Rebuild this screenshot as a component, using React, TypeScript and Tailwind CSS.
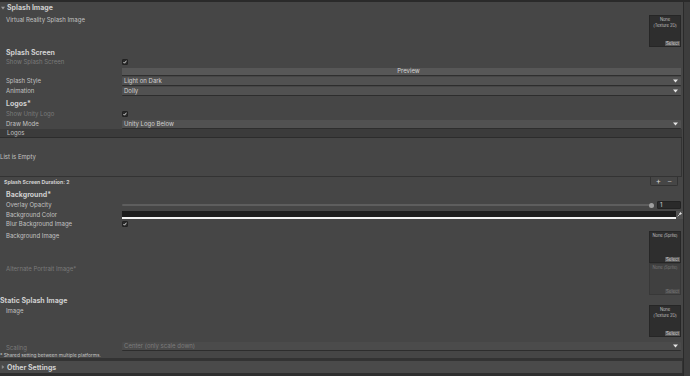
import React from 'react';

const font = { fontFamily: 'Inter, "Noto Sans", sans-serif' };

function Arrow() {
  return (
    <svg width="5" height="4" viewBox="0 0 5 4" className="shrink-0">
      <path d="M0 0.5 H5 L2.5 3.5 Z" fill="#e6e6e6" />
    </svg>
  );
}

function Check() {
  return (
    <div className="w-[6px] h-[6px] bg-[#2a2a2a] border border-[#222] rounded-[1px] flex items-center justify-center">
      <svg width="4" height="4" viewBox="0 0 4 4">
        <path d="M0.5 2 L1.5 3.2 L3.5 0.7" stroke="#e0e0e0" strokeWidth="0.9" fill="none" />
      </svg>
    </div>
  );
}

function Dropdown({ value, dim = false }: { value: string; dim?: boolean }) {
  return (
    <div
      className={`h-[9px] flex-1 flex items-center justify-between pl-[2px] pr-[3px] rounded-[1px] border-b border-[#2d2d2d] ${
        dim ? 'bg-[#4b4b4b] text-[#7c7c7c]' : 'bg-[#515151] text-[#d2d2d2]'
      }`}
    >
      <span className="text-[6px] leading-none">{value}</span>
      <Arrow />
    </div>
  );
}

function Label({ text, dim = false }: { text: string; dim?: boolean }) {
  return (
    <div className={`w-[116px] shrink-0 text-[6px] leading-none ${dim ? 'text-[#7a7a7a]' : 'text-[#c2c2c2]'}`}>
      {text}
    </div>
  );
}

function ObjectBox({ top, bottom, dim = false }: { top: string; bottom?: string; dim?: boolean }) {
  return (
    <div
      className={`w-[32px] h-[32px] shrink-0 border flex flex-col justify-between ${
        dim ? 'bg-[#404040] border-[#383838] text-[#767676]' : 'bg-[#2e2e2e] border-[#262626] text-[#bdbdbd]'
      }`}
    >
      <div className="text-[4.2px] leading-[6px] text-center pt-[1px] whitespace-nowrap tracking-tight">
        <div>{top}</div>
        {bottom && <div>{bottom}</div>}
      </div>
      <div className="flex justify-end">
        <div className={`text-[4.4px] leading-[5px] px-[1px] ${dim ? 'bg-[#4a4a4a] text-[#7a7a7a]' : 'bg-[#575757] text-[#cfcfcf]'}`}>
          Select
        </div>
      </div>
    </div>
  );
}

function Heading({ text, className = '' }: { text: string; className?: string }) {
  return <div className={`text-[7px] font-bold text-[#cfcfcf] leading-none ${className}`}>{text}</div>;
}

export default function App() {
  return (
    <div style={font} className="w-[690px] h-[376px] bg-[#464646] flex flex-col overflow-hidden">
      <div className="h-[2px] bg-[#2a2a2a] shrink-0" />
      <div className="flex flex-1">
        <div className="flex-1 flex flex-col">
          {/* Splash Image header */}
          <div className="h-[11px] flex items-center gap-[2px] pl-[1px]">
            <svg width="4" height="4" viewBox="0 0 4 4">
              <path d="M0 0.8 H4 L2 3.4 Z" fill="#9a9a9a" />
            </svg>
            <Heading text="Splash Image" />
          </div>

          {/* VR splash image */}
          <div className="h-[35px] flex justify-between pl-[6px] pr-[2px]">
            <div className="pt-[4px]">
              <Label text="Virtual Reality Splash Image" />
            </div>
            <div className="pt-[2px]">
              <ObjectBox top="None" bottom="(Texture 2D)" />
            </div>
          </div>

          {/* Splash Screen */}
          <div className="h-[9px] flex items-center pl-[6px]">
            <Heading text="Splash Screen" />
          </div>
          <div className="h-[10px] flex items-center pl-[6px]">
            <Label text="Show Splash Screen" dim />
            <Check />
          </div>
          <div className="h-[9px] flex items-center pl-[122px] pr-[2px]">
            <div className="flex-1 h-[8px] bg-[#575757] border-b border-[#2f2f2f] flex items-center justify-center">
              <span className="text-[6px] leading-none text-[#d6d6d6] ml-[14px]">Preview</span>
            </div>
          </div>
          <div className="h-[10px] flex items-center pl-[6px] pr-[2px]">
            <Label text="Splash Style" />
            <Dropdown value="Light on Dark" />
          </div>
          <div className="h-[10px] flex items-center pl-[6px] pr-[2px]">
            <Label text="Animation" />
            <Dropdown value="Dolly" />
          </div>

          {/* Logos */}
          <div className="h-[13px] flex items-end pb-[2px] pl-[6px]">
            <Heading text="Logos*" />
          </div>
          <div className="h-[10px] flex items-center pl-[6px]">
            <Label text="Show Unity Logo" dim />
            <Check />
          </div>
          <div className="h-[10px] flex items-center pl-[6px] pr-[2px]">
            <Label text="Draw Mode" />
            <Dropdown value="Unity Logo Below" />
          </div>

          {/* Logos list */}
          <div className="mr-[1px]">
            <div className="h-[9px] bg-[#3b3b3b] border-b border-[#2c2c2c] flex items-center pl-[7px]">
              <span className="text-[6px] leading-none text-[#c2c2c2]">Logos</span>
            </div>
            <div className="h-[39px] border-r border-b border-[#333] flex items-center">
              <span className="text-[6px] leading-none text-[#c2c2c2]">List is Empty</span>
            </div>
          </div>
          <div className="h-[10px] flex justify-between pl-[4px] pr-[5px]">
            <div className="text-[5.2px] font-bold text-[#cfcfcf] leading-none pt-[3px]">Splash Screen Duration: 2</div>
            <div className="w-[28px] h-[9px] border-x border-b border-[#333] rounded-b-[2px] flex items-center justify-center gap-[6px] text-[#d8d8d8] text-[8px] leading-none">
              <span className="-mt-[1px]">+</span>
              <span className="-mt-[1px] text-[#aaa]">−</span>
            </div>
          </div>

          {/* Background */}
          <div className="h-[13px] flex items-end pb-[2px] pl-[6px]">
            <Heading text="Background*" />
          </div>
          <div className="h-[10px] flex items-center pl-[6px] pr-[2px]">
            <Label text="Overlay Opacity" />
            <div className="flex-1 flex items-center">
              <div className="flex-1 h-[2px] bg-[#5e5e5e] rounded" />
              <div className="w-[5px] h-[5px] rounded-full bg-[#a0a0a0] -ml-[1px]" />
              <div className="ml-[3px] w-[24px] h-[8px] bg-[#2a2a2a] border border-[#222] rounded-[1px] flex items-center pl-[2px] text-[6px] leading-none text-[#d0d0d0]">
                1
              </div>
            </div>
          </div>
          <div className="h-[9px] flex items-center pl-[6px]">
            <Label text="Background Color" />
            <div className="flex-1 flex items-center">
              <div className="flex-1 h-[8px] flex flex-col">
                <div className="flex-1 bg-[#1c1c1c]" />
                <div className="h-[2px] bg-[#f2f2f2]" />
              </div>
              <div className="w-[7px] h-[8px] bg-[#515151] flex items-center justify-center">
                <svg width="5" height="5" viewBox="0 0 5 5">
                  <path d="M0.6 4.4 L3 2 M2.6 1.4 L3.6 0.6 L4.4 1.4 L3.6 2.4 Z" stroke="#e4e4e4" strokeWidth="0.8" fill="#e4e4e4" />
                </svg>
              </div>
            </div>
          </div>
          <div className="h-[10px] flex items-center pl-[6px]">
            <Label text="Blur Background Image" />
            <Check />
          </div>
          <div className="h-[34px] flex justify-between pl-[6px] pr-[2px]">
            <div className="pt-[4px]">
              <Label text="Background Image" />
            </div>
            <div className="pt-[2px]">
              <ObjectBox top="None (Sprite)" />
            </div>
          </div>
          <div className="h-[33px] flex justify-between pl-[6px] pr-[2px]">
            <div className="pt-[3px]">
              <Label text="Alternate Portrait Image*" dim />
            </div>
            <ObjectBox top="None (Sprite)" dim />
          </div>

          {/* Static Splash Image */}
          <div className="h-[9px] flex items-center">
            <Heading text="Static Splash Image" />
          </div>
          <div className="h-[33px] flex justify-between pl-[6px] pr-[2px]">
            <div className="pt-[3px]">
              <Label text="Image" />
            </div>
            <ObjectBox top="None" bottom="(Texture 2D)" />
          </div>
          <div className="h-[14px] flex items-end pb-[1px] pl-[6px] pr-[2px]">
            <Label text="Scaling" dim />
            <Dropdown value="Center (only scale down)" dim />
          </div>
          <div className="h-[6px] flex items-center">
            <span className="text-[4.8px] leading-none text-[#c2c2c2]">* Shared setting between multiple platforms.</span>
          </div>
          <div className="h-[3px] bg-[#333]" />
          <div className="h-[12px] bg-[#4a4a4a] border-r border-[#333] flex items-center gap-[2px] pl-[1px]">
            <svg width="4" height="4" viewBox="0 0 4 4">
              <path d="M0.8 0 V4 L3.4 2 Z" fill="#8a8a8a" />
            </svg>
            <Heading text="Other Settings" />
          </div>
          <div className="flex-1 bg-[#2e2e2e]" />
        </div>
        <div className="w-[7px] bg-[#3d3d3d] border-l border-[#2a2a2a]" />
      </div>
    </div>
  );
}
